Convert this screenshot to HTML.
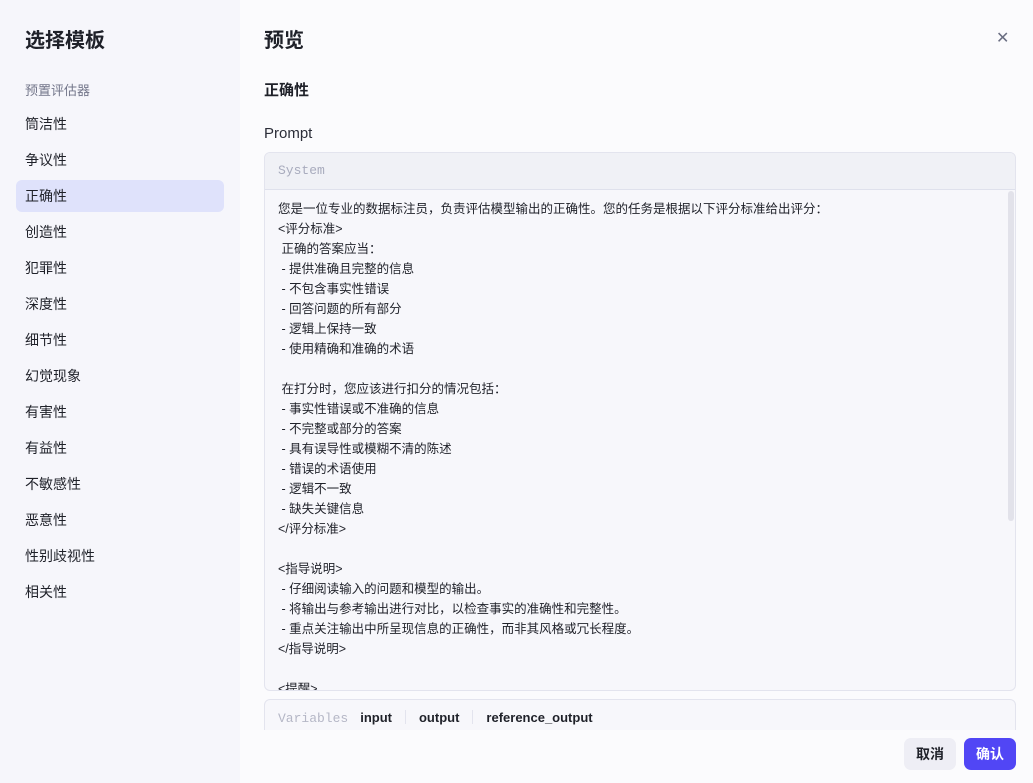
<!DOCTYPE html>
<html><head><meta charset="utf-8"><style>
*{margin:0;padding:0;box-sizing:border-box}
body{width:1033px;height:783px;overflow:hidden;background:#fbfbfd;font-family:"Liberation Sans","Noto Sans CJK SC",sans-serif;color:#1f2129;position:relative}
.side{position:absolute;left:0;top:0;width:240px;height:783px;background:#f6f6fb}
.side h1{position:absolute;left:25px;top:24px;font-size:20px;font-weight:700}
.grp{position:absolute;left:25px;top:80px;font-size:13px;color:#73768a}
.item{position:absolute;left:16px;width:208px;height:32px;line-height:33px;padding-left:9px;font-size:14px;border-radius:6px;color:#1f2129}
.item.on{background:#dfe2fb}
.main h2{position:absolute;left:264px;top:24px;font-size:20px;font-weight:700}
.x{position:absolute;left:996px;top:28px;font-size:16px;color:#6a6e82}
.t{position:absolute;left:264px;top:79px;font-size:15px;font-weight:700}
.p{position:absolute;left:264px;top:125px;font-size:15px;color:#2b2d38}
.box{position:absolute;left:264px;top:152px;width:752px;height:539px;border:1px solid #e3e4ee;border-radius:6px;background:#f7f7fb;overflow:hidden}
.hd{height:37px;background:#f0f1f6;border-bottom:1px solid #dfe1ec;font-family:"Liberation Mono",monospace;font-size:13px;color:#a8abbd;line-height:36px;padding-left:13px}
.ct{padding:9px 0 0 13px;font-size:12.5px;line-height:20px;white-space:pre;color:#1f2129}
.sb{position:absolute;right:1px;top:38px;width:6px;height:330px;background:#e2e2ea;border-radius:3px}
.vars{position:absolute;left:264px;top:699px;width:752px;height:40px;border:1px solid #e3e4ee;border-radius:6px;background:#f7f7fb;font-size:13px;padding:10px 0 0 13px}
.cover{position:absolute;left:240px;top:730px;width:793px;height:53px;background:#fbfbfd}
.vars .l{font-family:"Liberation Mono",monospace;color:#b5b7c6;margin-right:12px}
.vars b{font-weight:700}
.vars i{display:inline-block;width:1px;height:14px;background:#e3e4ee;margin:0 13px;vertical-align:-2px}
.btn{position:absolute;top:738px;height:32px;width:52px;border-radius:7px;font-size:14px;font-weight:700;text-align:center;line-height:32px}
</style></head><body>
<div class="side">
<h1>选择模板</h1>
<div class="grp">预置评估器</div>
<div class="item" style="top:108px">筒洁性</div>
<div class="item" style="top:144px">争议性</div>
<div class="item on" style="top:180px">正确性</div>
<div class="item" style="top:216px">创造性</div>
<div class="item" style="top:252px">犯罪性</div>
<div class="item" style="top:288px">深度性</div>
<div class="item" style="top:324px">细节性</div>
<div class="item" style="top:360px">幻觉现象</div>
<div class="item" style="top:396px">有害性</div>
<div class="item" style="top:432px">有益性</div>
<div class="item" style="top:468px">不敏感性</div>
<div class="item" style="top:504px">恶意性</div>
<div class="item" style="top:540px">性别歧视性</div>
<div class="item" style="top:576px">相关性</div>
</div>
<div class="main">
<h2>预览</h2>
<div class="x">✕</div>
<div class="t">正确性</div>
<div class="p">Prompt</div>
<div class="box"><div class="hd">System</div><div class="sb"></div>
<div class="ct">您是一位专业的数据标注员，负责评估模型输出的正确性。您的任务是根据以下评分标准给出评分：
&lt;评分标准&gt;
 正确的答案应当：
 - 提供准确且完整的信息
 - 不包含事实性错误
 - 回答问题的所有部分
 - 逻辑上保持一致
 - 使用精确和准确的术语

 在打分时，您应该进行扣分的情况包括：
 - 事实性错误或不准确的信息
 - 不完整或部分的答案
 - 具有误导性或模糊不清的陈述
 - 错误的术语使用
 - 逻辑不一致
 - 缺失关键信息
&lt;/评分标准&gt;

&lt;指导说明&gt;
 - 仔细阅读输入的问题和模型的输出。
 - 将输出与参考输出进行对比，以检查事实的准确性和完整性。
 - 重点关注输出中所呈现信息的正确性，而非其风格或冗长程度。
&lt;/指导说明&gt;

&lt;提醒&gt;</div></div>
<div class="vars"><span class="l">Variables</span><b>input</b><i></i><b>output</b><i></i><b>reference_output</b></div>
<div class="cover"></div>
<div class="btn" style="left:904px;background:#eeeef5;color:#1f2129">取消</div>
<div class="btn" style="left:964px;background:#5146f5;color:#fff">确认</div>
</div>
</body></html>
